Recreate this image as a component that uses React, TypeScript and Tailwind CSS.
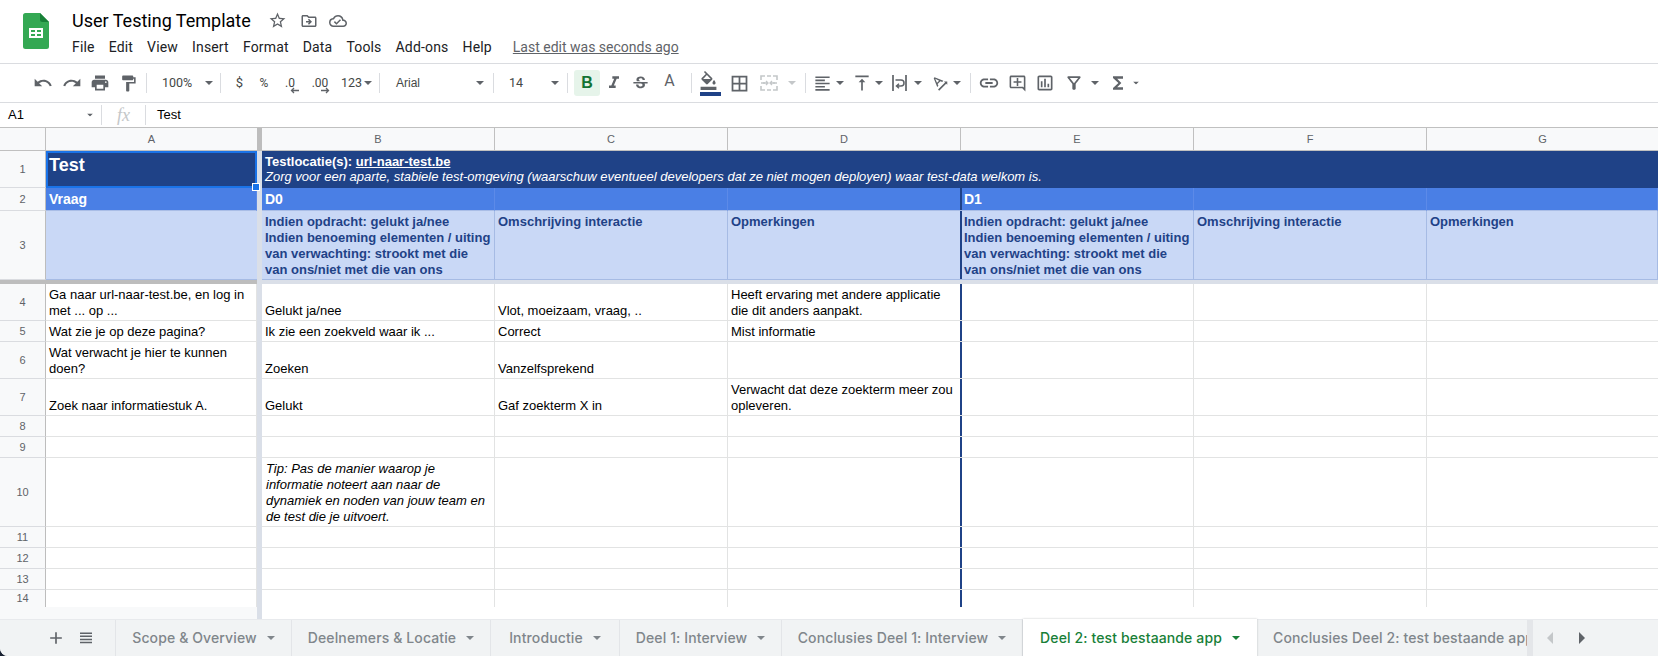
import type { ReactNode } from "react";
import {
  MdAdd,
  MdBorderAll,
  MdFormatAlignLeft,
  MdFormatColorFill,
  MdFormatItalic,
  MdFormatPaint,
  MdFunctions,
  MdLink,
  MdOutlineAddComment,
  MdOutlineAssessment,
  MdOutlineCloudDone,
  MdOutlineDriveFileMove,
  MdOutlineFilterAlt,
  MdPrint,
  MdRedo,
  MdStarBorder,
  MdStrikethroughS,
  MdTextRotationAngleup,
  MdUndo,
  MdVerticalAlignTop,
} from "react-icons/md";

function Caret({ color = "#5f6368", className = "" }: { color?: string; className?: string }) {
  return (
    <svg width="8" height="4" viewBox="0 0 8 4" className={`shrink-0 ${className}`}>
      <path d="M0 0h8L4 4z" fill={color} />
    </svg>
  );
}

function Sep() {
  return <div className="h-[20px] w-px shrink-0 bg-[#dadce0]" />;
}

function Slot({ w, children, className = "" }: { w: string; children: ReactNode; className?: string }) {
  return <div className={`flex h-[26px] shrink-0 items-center justify-center ${w} ${className}`}>{children}</div>;
}

function SheetsLogo() {
  return (
    <svg width="26" height="36" viewBox="0 0 26 36">
      <path d="M2.5 0H17l9 9v24.500a2.500 2.500 0 0 1-2.500 2.500h-21A2.500 2.500 0 0 1 0 33.500V2.500A2.500 2.500 0 0 1 2.500 0z" fill="#34a853" />
      <path d="M17 0l9 9h-6.500A2.500 2.500 0 0 1 17 6.500z" fill="#188038" />
      <path d="M6 15h14v10H6zM8 17v2h4v-2zm6 0v2h4v-2zm-6 4v2h4v-2zm6 0v2h4v-2z" fill="#fff" fillRule="evenodd" />
    </svg>
  );
}

function MergeIcon() {
  return (
    <svg width="18" height="18" viewBox="0 0 18 18" fill="none" stroke="#c4c7c9" strokeWidth="1.600">
      <path d="M1 6V2h4M7 2h4M13 2h4v4M1 12v4h4M7 16h4M13 16h4v-4M1 9h4M13 9h4" />
      <path d="M3 9h5M6 7l2 2-2 2M15 9h-5M12 7l-2 2 2 2" strokeWidth="1.300" />
    </svg>
  );
}

function WrapIcon() {
  return (
    <svg width="18" height="18" viewBox="0 0 18 18" fill="none" stroke="#5f6368" strokeWidth="1.700">
      <path d="M2 1v16M15 1v16" />
      <path d="M4.500 6H10a2.500 2.500 0 0 1 0 6H6M8 9.800L5.500 12 8 14.200" strokeWidth="1.500" />
    </svg>
  );
}

function Decimal({ label, right }: { label: string; right?: boolean }) {
  return (
    <span className="relative text-[12px] leading-none text-[#444746]">
      {label}
      <svg
        width="9"
        height="7"
        viewBox="0 0 9 7"
        className={`absolute top-[10px] ${right ? "right-[-2px]" : "left-[5px]"}`}
      >
        <path
          d={right ? "M0 3.500h7M5 1l2.500 2.500L5 6" : "M9 3.500H2M4 1L1.500 3.500 4 6"}
          stroke="#5f6368"
          strokeWidth="1.300"
          fill="none"
        />
      </svg>
    </span>
  );
}

function Toolbar() {
  const icon = "text-[#5f6368]";
  return (
    <div className="flex h-[39px] items-center border-b border-[#dadce0] pl-[29px] font-['Roboto',sans-serif]">
      <Slot w="w-[28px]"><MdUndo size={20} className={icon} /></Slot>
      <Slot w="w-[29px]"><MdRedo size={20} className={icon} /></Slot>
      <Slot w="w-[28px]"><MdPrint size={20} className={icon} /></Slot>
      <Slot w="w-[28px]"><MdFormatPaint size={19} className={icon} /></Slot>
      <Slot w="w-[4px]"><span /></Slot>
      <Sep />
      <Slot w="w-[73px]" className="justify-start pl-[15px]">
        <span className="w-[43px] text-[12.500px] text-[#444746]">100%</span>
        <Caret />
      </Slot>
      <Sep />
      <Slot w="w-[32px]" className="pl-[5px]"><span className="text-[13px] text-[#444746]">$</span></Slot>
      <Slot w="w-[22px]"><span className="text-[12px] text-[#444746]">%</span></Slot>
      <Slot w="w-[30px]"><Decimal label=".0" /></Slot>
      <Slot w="w-[30px]"><Decimal label=".00" right /></Slot>
      <Slot w="w-[44px]" className="justify-start pl-[6px]">
        <span className="mr-[2px] text-[12.500px] text-[#444746]">123</span>
        <Caret />
      </Slot>
      <Sep />
      <Slot w="w-[113px]" className="justify-start pl-[16px]">
        <span className="w-[80px] font-['Liberation_Sans',sans-serif] text-[12px] text-[#444746]">Arial</span>
        <Caret />
      </Slot>
      <Sep />
      <Slot w="w-[73px]" className="justify-start pl-[15px]">
        <span className="w-[42px] text-[12.500px] text-[#444746]">14</span>
        <Caret />
      </Slot>
      <Sep />
      <div className="ml-[6px] flex h-[26px] w-[26px] items-center justify-center rounded-[3px] bg-[#e6f4ea] font-['Liberation_Sans',sans-serif] text-[16px] font-bold text-[#137333]">
        B
      </div>
      <Slot w="w-[27px]"><MdFormatItalic size={20} className={icon} /></Slot>
      <Slot w="w-[27px]"><MdStrikethroughS size={19} className={icon} /></Slot>
      <Slot w="w-[28px]" className="pl-[3px]"><span className="pb-[4px] text-[16px] text-[#5f6368]">A</span></Slot>
      <Slot w="w-[9px]"><span /></Slot>
      <Sep />
      <Slot w="w-[33px]" className="relative">
        <MdFormatColorFill size={19} className={`${icon} -mt-[6px]`} />
        <div className="absolute bottom-0 left-[8px] h-[4px] w-[21px] bg-[#1f4287]" />
      </Slot>
      <Slot w="w-[29px]"><MdBorderAll size={21} className={icon} /></Slot>
      <Slot w="w-[30px]"><MergeIcon /></Slot>
      <Slot w="w-[16px]" className="justify-start pl-[4px]"><Caret color="#c4c7c9" /></Slot>
      <Slot w="w-[5px]"><span /></Slot>
      <Sep />
      <Slot w="w-[39px]" className="justify-start pl-[7px]">
        <MdFormatAlignLeft size={19} className={icon} />
        <Caret className="ml-[4px]" />
      </Slot>
      <Slot w="w-[39px]" className="justify-start pl-[7px]">
        <MdVerticalAlignTop size={20} className={icon} />
        <Caret className="ml-[3px]" />
      </Slot>
      <Slot w="w-[39px]" className="justify-start pl-[7px]">
        <WrapIcon />
        <Caret className="ml-[5px]" />
      </Slot>
      <Slot w="w-[38px]" className="justify-start pl-[8px]">
        <MdTextRotationAngleup size={19} className={icon} />
        <Caret className="ml-[3px]" />
      </Slot>
      <Slot w="w-[9px]"><span /></Slot>
      <Sep />
      <Slot w="w-[32px]" className="pl-[4px]"><MdLink size={22} className={icon} /></Slot>
      <Slot w="w-[28px]"><MdOutlineAddComment size={19} className={icon} /></Slot>
      <Slot w="w-[28px]"><MdOutlineAssessment size={20} className={icon} /></Slot>
      <Slot w="w-[45px]" className="justify-start pl-[5px]">
        <MdOutlineFilterAlt size={20} className={icon} />
        <Caret className="ml-[7px]" />
      </Slot>
      <Slot w="w-[40px]" className="justify-start pl-[4px]">
        <MdFunctions size={20} className={icon} />
        <Caret className="ml-[4px] scale-75" />
      </Slot>
    </div>
  );
}

const cols = "grid grid-cols-[46px_211px_5px_233px_233px_232px_234px_233px_231px]";

type Row = {
  n: number;
  h: string;
  cells?: [string, string, string, string];
  tip?: boolean;
};

const rows: Row[] = [
  { n: 4, h: "h-[37px]", cells: ["Ga naar url-naar-test.be, en log in met ... op ...", "Gelukt ja/nee", "Vlot, moeizaam, vraag, ..", "Heeft ervaring met andere applicatie die dit anders aanpakt."] },
  { n: 5, h: "h-[21px]", cells: ["Wat zie je op deze pagina?", "Ik zie een zoekveld waar ik ...", "Correct", "Mist informatie"] },
  { n: 6, h: "h-[37px]", cells: ["Wat verwacht je hier te kunnen doen?", "Zoeken", "Vanzelfsprekend", ""] },
  { n: 7, h: "h-[37px]", cells: ["Zoek naar informatiestuk A.", "Gelukt", "Gaf zoekterm X in", "Verwacht dat deze zoekterm meer zou opleveren."] },
  { n: 8, h: "h-[21px]" },
  { n: 9, h: "h-[21px]" },
  { n: 10, h: "h-[69px]", tip: true },
  { n: 11, h: "h-[21px]" },
  { n: 12, h: "h-[21px]" },
  { n: 13, h: "h-[21px]" },
  { n: 14, h: "h-[17px]" },
];

function RowNum({ n }: { n: number }) {
  return (
    <div className="flex items-center justify-center border-b border-r border-b-[#dadce0] border-r-[#bdbdbd] bg-[#f8f9fa] text-[11px] text-[#5f6368]">
      {n}
    </div>
  );
}

function Freeze() {
  return <div className="bg-[#dadfe8]" />;
}

function DataRow({ row }: { row: Row }) {
  const c = row.cells ?? ["", "", "", ""];
  const cell = "flex items-end border-b border-r border-[#e2e3e3] pb-[2px] pl-[3px] pr-[3px] text-[13px] leading-[15.500px] text-black";
  return (
    <div className={`${cols} ${row.h} overflow-hidden`}>
      <RowNum n={row.n} />
      <div className={cell}><span>{c[0]}</span></div>
      <Freeze />
      {row.tip ? (
        <div className="border-b border-r border-[#e2e3e3] pl-[4px] pr-[3px] pt-[3px] text-[13px] italic leading-[16px] text-black">
          Tip: Pas de manier waarop je informatie noteert aan naar de dynamiek en noden van jouw team en de test die je uitvoert.
        </div>
      ) : (
        <div className={cell}><span>{c[1]}</span></div>
      )}
      <div className={cell}><span>{c[2]}</span></div>
      <div className={`${cell} border-r-0`}><span>{c[3]}</span></div>
      <div className="border-b border-r border-[#e2e3e3]">
        <div className="h-full w-[2px] bg-[#1f4287]" />
      </div>
      <div className="border-b border-r border-[#e2e3e3]" />
      <div className="border-b border-[#e2e3e3]" />
    </div>
  );
}

function SubHead() {
  return (
    <div className="whitespace-nowrap">
      <div>Indien opdracht: gelukt ja/nee</div>
      <div>Indien benoeming elementen / uiting</div>
      <div>van verwachting: strookt met die</div>
      <div>van ons/niet met die van ons</div>
    </div>
  );
}

function Sheet() {
  const h2 = "border-b border-r border-b-[#a9bde6] border-r-[#5c8ae8] pl-[3px] pt-[2px] text-[14px] font-bold leading-[18px] text-white";
  const h3 = "overflow-hidden border-b border-r border-[#a6bbe4] pl-[3px] pt-[3px] text-[13px] font-bold leading-[16px] text-[#1f4287]";
  return (
    <div className="font-['Liberation_Sans',sans-serif]">
      {/* kolomkoppen */}
      <div className={`${cols} h-[24px] border-y border-[#c0c0c0] bg-[#f8f9fa] text-[11px] text-[#5f6368]`}>
        <div className="border-r border-[#c0c0c0]" />
        <div className="flex items-center justify-center">A</div>
        <div className="bg-[#bdbdbd]" />
        <div className="flex items-center justify-center border-r border-[#c0c0c0]">B</div>
        <div className="flex items-center justify-center border-r border-[#c0c0c0]">C</div>
        <div className="flex items-center justify-center">D</div>
        <div className="flex items-center justify-center border-x border-[#c0c0c0]">E</div>
        <div className="flex items-center justify-center border-r border-[#c0c0c0]">F</div>
        <div className="flex items-center justify-center">G</div>
      </div>

      {/* rij 1 */}
      <div className={`${cols} h-[37px]`}>
        <RowNum n={1} />
        <div className="relative border-2 border-[#1a73e8] bg-[#1f4287] pl-[1px] text-[18px] font-bold leading-[24px] text-white">
          Test
          <div className="absolute bottom-[-5px] right-[-5px] h-[8px] w-[8px] border border-white bg-[#1a73e8]" />
        </div>
        <Freeze />
        <div className="col-span-6 border-b border-[#1f4287] bg-[#1f4287] pl-[3px] pt-[3px] text-[13px] leading-[15px] text-white">
          <div className="font-bold">
            Testlocatie(s): <span className="underline">url-naar-test.be</span>
          </div>
          <div className="italic">
            Zorg voor een aparte, stabiele test-omgeving (waarschuw eventueel developers dat ze niet mogen deployen) waar test-data welkom is.
          </div>
        </div>
      </div>

      {/* rij 2 */}
      <div className={`${cols} h-[23px] bg-[#4a7fe5]`}>
        <RowNum n={2} />
        <div className={h2}>Vraag</div>
        <Freeze />
        <div className={h2}>D0</div>
        <div className={h2} />
        <div className={`${h2} border-r-0`} />
        <div className={`${h2} relative pl-[4px]`}>
          D1
          <div className="absolute inset-y-0 left-0 w-[2px] bg-[#1f4287]" />
        </div>
        <div className={h2} />
        <div className={h2} />
      </div>

      {/* rij 3 */}
      <div className={`${cols} h-[69px] bg-[#c9d8f6]`}>
        <RowNum n={3} />
        <div className="border-b border-[#a6bbe4]" />
        <Freeze />
        <div className={h3}><SubHead /></div>
        <div className={h3}>Omschrijving interactie</div>
        <div className={`${h3} border-r-0`}>Opmerkingen</div>
        <div className={`${h3} relative pl-[4px]`}>
          <SubHead />
          <div className="absolute inset-y-0 left-0 w-[2px] bg-[#1f4287]" />
        </div>
        <div className={h3}>Omschrijving interactie</div>
        <div className={h3}>Opmerkingen</div>
      </div>

      {/* freeze balk */}
      <div className="flex h-[4px]">
        <div className="w-[257px] bg-[#bdbdbd]" />
        <div className="flex-1 bg-[#dadfe8]" />
      </div>

      {rows.map((r) => (
        <DataRow key={r.n} row={r} />
      ))}

      <div className="flex h-[12px]">
        <div className="w-[257px] bg-[#f8f9fa]" />
        <div className="w-[5px] bg-[#dadfe8]" />
      </div>
    </div>
  );
}

const tabs = [
  { name: "Scope & Overview", w: "w-[176px]" },
  { name: "Deelnemers & Locatie", w: "w-[199px]" },
  { name: "Introductie", w: "w-[129px]" },
  { name: "Deel 1: Interview", w: "w-[162px]" },
  { name: "Conclusies Deel 1: Interview", w: "w-[241px]" },
];

function TabBar() {
  return (
    <div className="flex h-[38px] border-t border-[#e8eaed] bg-[#f1f3f4] pb-0 font-['Inter',sans-serif] text-[14px] font-medium tracking-[0.12px] text-[#80868b]">
      <div className="flex w-[116px] items-center border-r border-[#e3e5e8] pb-[2px] pl-[46px]">
        <MdAdd size={20} className="text-[#5f6368]" />
        <svg width="14" height="14" viewBox="0 0 14 14" className="ml-[13px]" fill="#5f6368">
          <path d="M1 1.500h12v1.500H1zM1 4.500h12V6H1zM1 7.700h12v1.500H1zM1 10.800h12v1.500H1z" />
        </svg>
      </div>
      {tabs.map((t) => (
        <div key={t.name} className={`flex items-center justify-center gap-[10px] border-r border-[#e3e5e8] pb-[2px] ${t.w}`}>
          <span>{t.name}</span>
          <Caret color="#80868b" />
        </div>
      ))}
      <div className="-mt-px flex w-[234px] items-center justify-center gap-[10px] bg-white pb-[1px] text-[#188038] shadow-[0_0_2px_rgba(60,64,67,0.3)]">
        <span>Deel 2: test bestaande app</span>
        <Caret color="#188038" />
      </div>
      <div className="flex w-[270px] items-center overflow-hidden whitespace-nowrap pb-[2px] pl-[16px]">
        Conclusies Deel 2: test bestaande app
      </div>
      <div className="flex flex-1 items-center border-l-[6px] border-[#e4e6e9] pb-[2px] pl-[14px]">
        <svg width="8" height="14" viewBox="0 0 8 14"><path d="M6 1v12L0 7z" fill="#c4c7c9" /></svg>
        <svg width="8" height="14" viewBox="0 0 8 14" className="ml-[23px]"><path d="M1 1v12l6-6z" fill="#5f6368" /></svg>
      </div>
    </div>
  );
}

export default function App() {
  return (
    <div className="h-[656px] w-[1658px] overflow-hidden bg-[#1a2233]">
      <div className="h-[656px] overflow-hidden rounded-bl-[8px] bg-white">
        {/* titel en menu */}
        <div className="flex h-[64px] border-b border-[#dadce0] pl-[23px] font-['Roboto',sans-serif]">
          <div className="pt-[13px]"><SheetsLogo /></div>
          <div className="pl-[23px] pt-[9px]">
            <div className="flex h-[23px] items-center">
              <span className="w-[196px] text-[18px] leading-[22px] text-black">User Testing Template</span>
              <MdStarBorder size={19} className="text-[#5f6368]" />
              <MdOutlineDriveFileMove size={18} className="ml-[13px] text-[#5f6368]" />
              <MdOutlineCloudDone size={18} className="ml-[11px] text-[#5f6368]" />
            </div>
            <div className="mt-[5px] flex items-center gap-[14px] text-[14px] leading-[20px] tracking-[0.17px] text-[#202124]">
              <span>File</span>
              <span>Edit</span>
              <span>View</span>
              <span>Insert</span>
              <span>Format</span>
              <span>Data</span>
              <span>Tools</span>
              <span>Add-ons</span>
              <span>Help</span>
              <span className="ml-[7px] tracking-normal text-[#5f6368] underline">Last edit was seconds ago</span>
            </div>
          </div>
        </div>
        <Toolbar />
        {/* formulebalk */}
        <div className="flex h-[24px] items-center font-['Liberation_Sans',sans-serif] text-[13px] text-black">
          <div className="flex w-[102px] items-center justify-between border-r border-[#dadce0] pl-[8px] pr-[7px]">
            <span>A1</span>
            <Caret className="scale-75" />
          </div>
          <div className="flex w-[44px] justify-center border-r border-[#dadce0] font-['Liberation_Serif',serif] text-[18px] italic leading-[20px] text-[#c4c7c9]">
            fx
          </div>
          <span className="pl-[11px]">Test</span>
        </div>
        <Sheet />
        <TabBar />
      </div>
    </div>
  );
}
